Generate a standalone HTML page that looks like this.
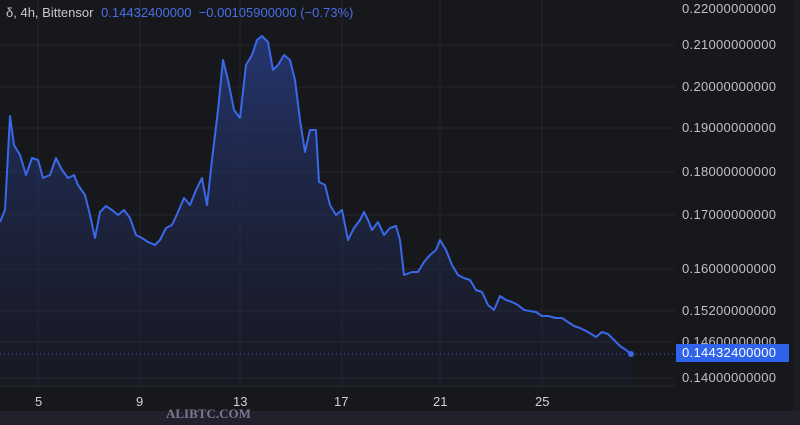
<!DOCTYPE html><html><head><style>
body{margin:0;width:800px;height:425px;background:#17181c;overflow:hidden;font-family:"Liberation Sans",sans-serif;position:relative}
.t{position:absolute;font-size:13px;color:#c8c9cd}
.p{position:absolute;left:682px;font-size:13px;color:#bfc0c4;letter-spacing:0.3px}
.x{position:absolute;top:394px;font-size:13px;color:#d0d1d4}
</style></head><body>
<div style="position:absolute;left:0;top:411px;width:800px;height:14px;background:#22212b"></div>
<div style="position:absolute;left:793px;top:0;width:7px;height:411px;background:#1c1d22"></div>
<svg width="800" height="425" style="position:absolute;left:0;top:0">
<defs><linearGradient id="g" x1="0" y1="0" x2="0" y2="1"><stop offset="0" stop-color="#2a3f8a" stop-opacity="0.75"/><stop offset="1" stop-color="#1b2240" stop-opacity="0.2"/></linearGradient></defs>
<g stroke="#24252b" stroke-width="1">
<line x1="38" y1="0" x2="38" y2="386"/><line x1="140" y1="0" x2="140" y2="386"/><line x1="240" y1="0" x2="240" y2="386"/><line x1="342" y1="0" x2="342" y2="386"/><line x1="440" y1="0" x2="440" y2="386"/><line x1="542" y1="0" x2="542" y2="386"/>
<line x1="0" y1="45" x2="675" y2="45"/><line x1="0" y1="87" x2="675" y2="87"/><line x1="0" y1="128" x2="675" y2="128"/><line x1="0" y1="172" x2="675" y2="172"/><line x1="0" y1="215" x2="675" y2="215"/><line x1="0" y1="269" x2="675" y2="269"/><line x1="0" y1="311" x2="675" y2="311"/><line x1="0" y1="342" x2="675" y2="342"/><line x1="0" y1="378" x2="675" y2="378"/>
</g>
<line x1="0" y1="386" x2="675" y2="386" stroke="#2a2b31"/>
<path id="l" d="M0,222 L5,210 10,116 14,145 20,155 26,175 32,158 38,160 43,178 50,175 56,158 62,170 68,178 74,175 78,185 85,195 90,215 95,238 100,212 106,206 112,210 118,215 124,210 130,218 136,235 142,238 148,242 155,245 160,240 166,228 172,225 178,212 184,198 190,205 196,190 202,178 207,205 212,160 218,110 223,60 228,80 234,110 240,118 246,65 252,55 257,40 262,36 268,42 273,70 278,65 284,55 290,60 295,80 300,120 305,152 310,130 316,130 319,182 325,185 330,205 336,215 342,210 348,240 354,228 360,220 364,212 368,220 372,230 378,222 384,235 390,228 396,226 400,240 404,275 412,272 418,272 424,262 430,255 436,250 440,240 446,250 452,265 458,275 464,278 470,280 476,290 482,292 488,305 494,310 500,296 506,300 512,302 518,305 524,310 530,311 536,312 542,316 548,316 556,318 562,318 568,322 574,326 580,328 588,332 596,337 602,332 608,334 614,340 620,346 626,350 631,354" fill="none"/>
<path d="M0,222 L5,210 10,116 14,145 20,155 26,175 32,158 38,160 43,178 50,175 56,158 62,170 68,178 74,175 78,185 85,195 90,215 95,238 100,212 106,206 112,210 118,215 124,210 130,218 136,235 142,238 148,242 155,245 160,240 166,228 172,225 178,212 184,198 190,205 196,190 202,178 207,205 212,160 218,110 223,60 228,80 234,110 240,118 246,65 252,55 257,40 262,36 268,42 273,70 278,65 284,55 290,60 295,80 300,120 305,152 310,130 316,130 319,182 325,185 330,205 336,215 342,210 348,240 354,228 360,220 364,212 368,220 372,230 378,222 384,235 390,228 396,226 400,240 404,275 412,272 418,272 424,262 430,255 436,250 440,240 446,250 452,265 458,275 464,278 470,280 476,290 482,292 488,305 494,310 500,296 506,300 512,302 518,305 524,310 530,311 536,312 542,316 548,316 556,318 562,318 568,322 574,326 580,328 588,332 596,337 602,332 608,334 614,340 620,346 626,350 631,354 L631,386 0,386Z" fill="url(#g)"/>
<use href="#l" stroke="#3a68e8" stroke-width="2" stroke-linejoin="round"/>
<line x1="0" y1="354" x2="675" y2="354" stroke="#3a5fd0" stroke-dasharray="1,3"/>
<circle cx="631" cy="354" r="3" fill="#3a68e8"/>
</svg>
<div class="t" style="left:6px;top:5px">δ, 4h, Bittensor <span style="color:#4a6ee6;margin-left:4px">0.14432400000&nbsp; −0.00105900000 (−0.73%)</span></div>
<div class="p" style="top:1px">0.22000000000</div>
<div class="p" style="top:37px">0.21000000000</div>
<div class="p" style="top:79px">0.20000000000</div>
<div class="p" style="top:120px">0.19000000000</div>
<div class="p" style="top:164px">0.18000000000</div>
<div class="p" style="top:207px">0.17000000000</div>
<div class="p" style="top:261px">0.16000000000</div>
<div class="p" style="top:303px">0.15200000000</div>
<div class="p" style="top:334px">0.14600000000</div>
<div class="p" style="top:370px">0.14000000000</div>
<div style="position:absolute;left:676px;top:344px;width:113px;height:18px;background:#2f63ec;color:#fff;font-size:13px;line-height:18px;padding-left:6px;letter-spacing:0.3px;box-sizing:border-box">0.14432400000</div>
<div class="x" style="left:35px">5</div>
<div class="x" style="left:136px">9</div>
<div class="x" style="left:233px">13</div>
<div class="x" style="left:334px">17</div>
<div class="x" style="left:433px">21</div>
<div class="x" style="left:535px">25</div>
<div style="position:absolute;left:166px;top:406px;font-family:'Liberation Serif',serif;font-size:13px;color:#7a7890;font-weight:bold">ALIBTC.COM</div>
</body></html>
